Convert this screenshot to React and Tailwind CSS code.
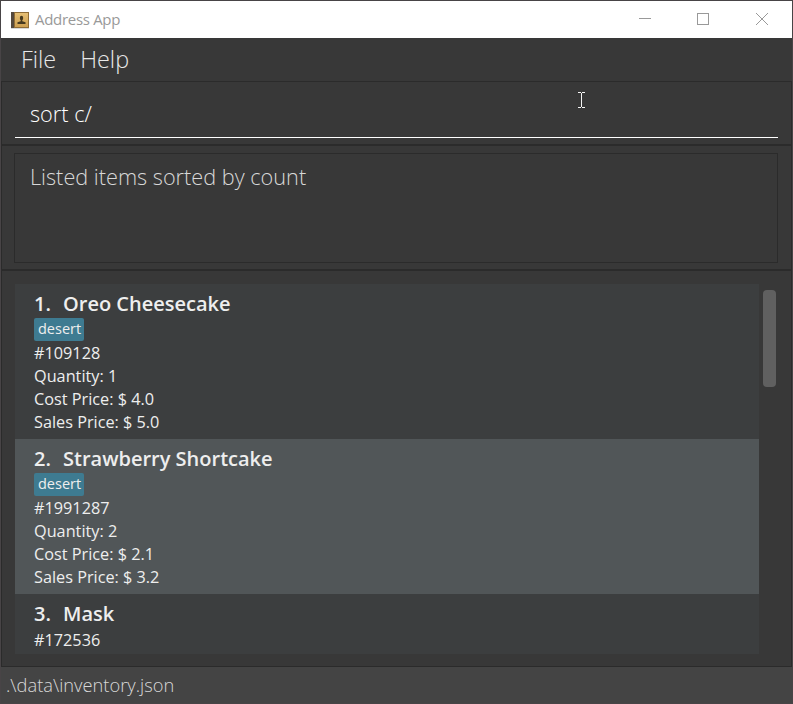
const items = [
  { name: 'Oreo Cheesecake', tag: 'desert', lines: ['#109128', 'Quantity: 1', 'Cost Price: $ 4.0', 'Sales Price: $ 5.0'] },
  { name: 'Strawberry Shortcake', tag: 'desert', lines: ['#1991287', 'Quantity: 2', 'Cost Price: $ 2.1', 'Sales Price: $ 3.2'] },
  { name: 'Mask', lines: ['#172536'] },
];

function AppIcon() {
  return (
    <svg className="h-[18px] w-[18px] shrink-0" viewBox="0 0 18 18">
      <defs>
        <linearGradient id="cover" x1="0" y1="0" x2="0" y2="1">
          <stop offset="0" stopColor="#e6bf74" />
          <stop offset="1" stopColor="#cd9f50" />
        </linearGradient>
      </defs>
      <rect x="0" y="17" width="18" height="1" fill="#d8d8d8" />
      <rect x="0" y="1" width="18" height="16" fill="#8f6c36" />
      <rect x="0" y="1" width="3" height="16" fill="#54483c" />
      <rect x="4" y="2" width="13" height="14" fill="url(#cover)" />
      <ellipse cx="10.5" cy="7" rx="1.7" ry="2.2" fill="#46391f" />
      <path d="M9.7 8.5h1.6v1.7l3.2 1.1v1.7h-8v-1.7l3.2-1.1z" fill="#46391f" />
    </svg>
  );
}

function TitleBar() {
  return (
    <header className="flex h-[37px] items-center bg-white pl-[10px] text-[#999999]">
      <AppIcon />
      <span className="mb-[2px] ml-[6px] text-[15px] leading-[20px] tracking-[-0.3px]">Address App</span>
      <svg className="ml-auto h-[37px] w-[174px]" viewBox="0 0 174 37" fill="none" stroke="#999999" shapeRendering="crispEdges">
        <path d="M21 17.5h12M79.5 12.5h11v11h-11z" />
        <path d="M138 12l12 12M150 12l-12 12" shapeRendering="auto" />
      </svg>
    </header>
  );
}

function ItemCard({ item, index }) {
  return (
    <li className={`h-[155px] shrink-0 pl-[19px] pt-[6px] text-[#eeeeee] ${index % 2 ? 'bg-[#515658]' : 'bg-[#3c3e3f]'}`}>
      <h2 className="flex h-[28px] text-[20px] font-semibold leading-[27px]">
        <span className="w-[29px]">{index + 1}.</span>
        <span>{item.name}</span>
      </h2>
      {item.tag && (
        <div className="flex h-[23px]">
          <span className="h-[23px] w-[50px] rounded-[2px] bg-[#3e7b91] pl-1 text-[14.5px] leading-[21px]">{item.tag}</span>
        </div>
      )}
      {item.lines.map((line) => (
        <p key={line} className="h-[23px] text-[16.25px] leading-[25px]">{line}</p>
      ))}
    </li>
  );
}

export default function App() {
  return (
    <div className="relative flex h-[704px] w-[793px] flex-col overflow-hidden border border-[#484446] bg-[#383838] font-['Open_Sans','Noto_Sans',sans-serif]">
      <TitleBar />
      <nav className="flex h-[43px] gap-6 pl-[20px] text-[23.4px] font-light leading-[42px] text-[#e8e8e8]">
        <span>File</span>
        <span>Help</span>
      </nav>
      <main className="flex h-[586px] flex-col border border-[#2b2b2b]">
        <section className="h-[64px] border-b-2 border-[#2b2b2b] px-[13px]">
          <div className="h-[56px] border-b border-white pl-[15px] pt-[14px] text-[21.7px] font-light leading-[36px] text-white">sort c/</div>
        </section>
        <section className="h-[125px] border-b-2 border-[#2b2b2b] pl-[12px] pr-[13px] pt-[7px]">
          <div className="h-[110px] border border-[#2b2b2b] pl-[15px] pt-[5px] text-[21.7px] font-light leading-[36px] text-[#d8d8d8]">Listed items sorted by count</div>
        </section>
        <section className="flex px-[13px] pt-[13px]">
          <ul className="flex h-[370px] w-[744px] flex-col overflow-hidden">
            {items.map((item, i) => <ItemCard key={item.name} item={item} index={i} />)}
          </ul>
          <div className="ml-1 mt-1.5 h-[97px] w-[13px] rounded-[4px] bg-[#606060]" />
        </section>
      </main>
      <footer className="flex-1 bg-[#444444] pl-[5px] text-[18.3px] font-light leading-[36px] text-[#d8d8d8]">.\data\inventory.json</footer>
      <svg className="absolute left-[577px] top-[91px] h-[17px] w-[7px]" viewBox="0 0 7 17" stroke="#f4f4f4" fill="none" shapeRendering="crispEdges">
        <path d="M0 .5h3M4 .5h3M0 15.5h3M4 15.5h3M3.5 1v14" />
      </svg>
    </div>
  );
}
